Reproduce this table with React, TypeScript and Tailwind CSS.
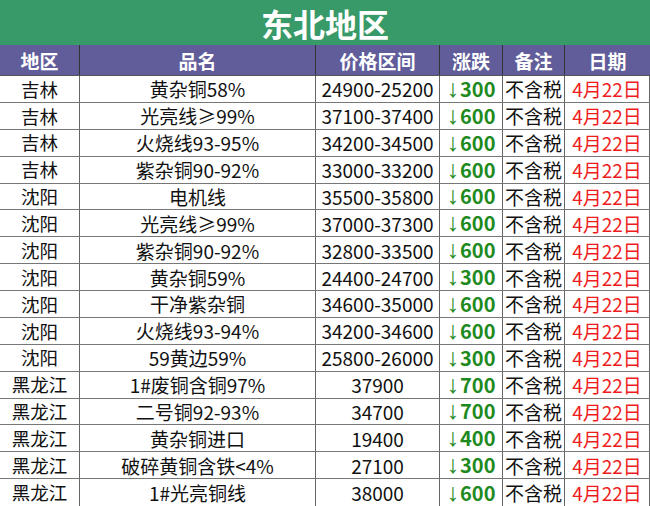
import React from "react";

type Row = [string, string, string, string];

const rows: Row[] = [
  ["吉林", "黄杂铜58%", "24900-25200", "300"],
  ["吉林", "光亮线≥99%", "37100-37400", "600"],
  ["吉林", "火烧线93-95%", "34200-34500", "600"],
  ["吉林", "紫杂铜90-92%", "33000-33200", "600"],
  ["沈阳", "电机线", "35500-35800", "600"],
  ["沈阳", "光亮线≥99%", "37000-37300", "600"],
  ["沈阳", "紫杂铜90-92%", "32800-33500", "600"],
  ["沈阳", "黄杂铜59%", "24400-24700", "300"],
  ["沈阳", "干净紫杂铜", "34600-35000", "600"],
  ["沈阳", "火烧线93-94%", "34200-34600", "600"],
  ["沈阳", "59黄边59%", "25800-26000", "300"],
  ["黑龙江", "1#废铜含铜97%", "37900", "700"],
  ["黑龙江", "二号铜92-93%", "34700", "700"],
  ["黑龙江", "黄杂铜进口", "19400", "400"],
  ["黑龙江", "破碎黄铜含铁<4%", "27100", "300"],
  ["黑龙江", "1#光亮铜线", "38000", "600"],
];

const cols = "grid grid-cols-[80px_236px_124px_63px_62px_85px]";

export default function App() {
  return (
    <div
      className="w-[650px] h-[506px] bg-white overflow-hidden flex flex-col"
      style={{ fontFamily: '"Noto Sans CJK SC", "Noto Sans", sans-serif' }}
    >
      <div className="h-[45px] bg-[#389a68] flex items-center justify-center text-white font-bold text-[32px] leading-none">
        东北地区
      </div>
      <div className={`${cols} h-[31px] bg-[#605d9a] text-white font-bold text-[19px] leading-none border-b border-[#555]`}>
        {["地区", "品名", "价格区间", "涨跌", "备注", "日期"].map((h, i) => (
          <div
            key={h}
            className={`flex items-center justify-center ${i < 5 ? "border-r border-[#333]" : ""}`}
          >
            {h}
          </div>
        ))}
      </div>
      <div className="flex-1 grid grid-rows-[repeat(16,minmax(0,1fr))]">
        {rows.map((r, idx) => (
          <div
            key={idx}
            className={`${cols} text-[19px] leading-none text-[#111] ${idx < 15 ? "border-b border-[#777]" : ""}`}
          >
            <div className="flex items-center justify-center border-r border-[#666] text-[18.5px]">{r[0]}</div>
            <div className="flex items-center justify-center border-r border-[#666]">{r[1]}</div>
            <div className="flex items-center justify-center border-r border-[#666]">{r[2]}</div>
            <div className="flex items-center justify-center border-r border-[#666] text-[#1e8a1e] font-bold text-[20px]">
              <span
                className="font-normal text-[25px] leading-none mr-[1px] -mt-[1px]"
                style={{ fontFamily: '"Liberation Sans", sans-serif' }}
              >
                ↓
              </span>
              {r[3]}
            </div>
            <div className="flex items-center justify-center border-r border-[#666]">不含税</div>
            <div className="flex items-center justify-center text-[#ee1c1c] border-r border-[#666]">4月22日</div>
          </div>
        ))}
      </div>
    </div>
  );
}
